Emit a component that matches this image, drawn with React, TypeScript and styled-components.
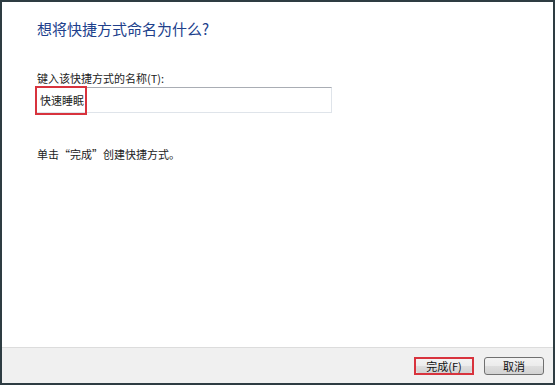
import React from "react";
import styled, { createGlobalStyle } from "styled-components";

const Global = createGlobalStyle`
  html, body { margin: 0; padding: 0; width: 555px; height: 385px; overflow: hidden; background: #fff; }
  * { box-sizing: border-box; }
  body { font-family: "Noto Sans CJK SC", "Liberation Sans", sans-serif; }
`;

const Frame = styled.div`
  width: 555px;
  height: 385px;
  border: 2px solid #2e3c42;
  display: flex;
  flex-direction: column;
  background: #fff;
`;

const Content = styled.div`
  flex: 1;
  padding: 17px 0 0 35px;
  display: flex;
  flex-direction: column;
`;

const Title = styled.h1`
  margin: 0;
  font-size: 15px;
  line-height: 20px;
  font-weight: normal;
  color: #20408c;
`;

const Label = styled.div`
  margin-top: 32px;
  font-size: 11px;
  line-height: 14px;
  color: #222;
`;

const TextBox = styled.div`
  position: relative;
  margin: 2px 0 0 -2px;
  width: 297px;
  height: 26px;
  border: 1px solid #dfe4ea;
  border-top-color: #a9adb4;
  background: #fff;
  display: flex;
  align-items: center;
  padding-left: 4px;
  font-size: 11px;
  color: #222;
`;

const Mark = styled.span`
  position: absolute;
  left: -1px;
  top: -2px;
  width: 52px;
  height: 29px;
  border: 2px solid #d8333d;
`;

const Note = styled.div`
  margin-top: 34px;
  font-size: 11px;
  line-height: 14px;
  color: #222;
`;

const Footer = styled.div`
  height: 36px;
  border-top: 1px solid #dcdcdc;
  background: #f0f0f0;
  display: flex;
  align-items: center;
  justify-content: flex-end;
  gap: 10px;
  padding: 1px 9px 0 0;
`;

const Highlight = styled.span`
  display: flex;
  border: 2px solid #d8333d;
`;

const Button = styled.button<{ $framed?: boolean }>`
  width: ${(p) => (p.$framed ? "56px" : "60px")};
  height: ${(p) => (p.$framed ? "14px" : "18px")};
  padding: 0;
  border: ${(p) => (p.$framed ? "none" : "1px solid #707070")};
  border-radius: 3px;
  background: linear-gradient(#f3f3f3 0%, #ececec 48%, #dedede 52%, #d2d2d2 100%);
  font-family: "Noto Sans CJK SC", "Liberation Sans", sans-serif;
  font-size: 11px;
  line-height: 14px;
  color: #111;
  display: flex;
  align-items: center;
  justify-content: center;
`;

export default function App() {
  return (
    <>
      <Global />
      <Frame>
        <Content>
          <Title>想将快捷方式命名为什么?</Title>
          <Label>键入该快捷方式的名称(T):</Label>
          <TextBox>
            快速睡眠
            <Mark />
          </TextBox>
          <Note>单击“完成”创建快捷方式。</Note>
        </Content>
        <Footer>
          <Highlight>
            <Button $framed>完成(F)</Button>
          </Highlight>
          <Button>取消</Button>
        </Footer>
      </Frame>
    </>
  );
}
